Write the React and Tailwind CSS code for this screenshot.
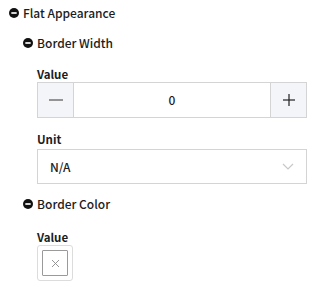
import React from 'react'

const font = { fontFamily: '"Noto Sans CJK KR", "Noto Sans", sans-serif' }

const Collapse = ({ size = 10 }) => (
  <svg width={size} height={size} viewBox="0 0 12 12" className="shrink-0">
    <circle cx="6" cy="6" r="6" fill="#111" />
    <rect x="2.8" y="5" width="6.4" height="2" fill="#fff" />
  </svg>
)

const Label = ({ children }) => (
  <div className="h-[16px] leading-[16px] text-[11.5px] font-bold text-[#1c1c1c]">{children}</div>
)

export default function App() {
  return (
    <div className="w-[316px] h-[287px] bg-white text-[#1c1c1c]" style={font}>
      <div className="h-[26px] flex items-center gap-[4px] pl-[9px] text-[12px] font-medium">
        <Collapse />
        <span>Flat Appearance</span>
      </div>
      <div className="mt-[4px] h-[26px] flex items-center gap-[4px] pl-[23px] text-[12px] font-medium">
        <Collapse />
        <span>Border Width</span>
      </div>

      <div className="pl-[37px] pr-[9px]">
        <div className="mt-[10px]"><Label>Value</Label></div>
        <div className="h-[36px] flex border border-[#d4d4d4]">
          <button className="w-[36px] bg-[#f4f5f9] border-r border-[#d4d4d4] flex items-center justify-center">
            <svg width="14" height="2" viewBox="0 0 14 2"><rect width="14" height="1.2" y="0.4" fill="#555" /></svg>
          </button>
          <div className="flex-1 flex items-center justify-center text-[12px] font-medium">0</div>
          <button className="w-[36px] bg-[#f4f5f9] border-l border-[#d4d4d4] flex items-center justify-center">
            <svg width="12" height="12" viewBox="0 0 12 12">
              <rect x="0" y="5.4" width="12" height="1.2" fill="#222" />
              <rect x="5.4" y="0" width="1.2" height="12" fill="#222" />
            </svg>
          </button>
        </div>

        <div className="mt-[13px]"><Label>Unit</Label></div>
        <div className="mt-[2px] h-[35px] flex items-center justify-between border border-[#d4d4d4] pl-[12px] pr-[12px] text-[12px] font-medium">
          <span>N/A</span>
          <svg width="12" height="7" viewBox="0 0 12 7" fill="none">
            <path d="M1 1l5 5 5-5" stroke="#c8c8c8" strokeWidth="1.2" />
          </svg>
        </div>
      </div>

      <div className="mt-[7px] h-[26px] flex items-center gap-[4px] pl-[23px] text-[12px] font-medium">
        <Collapse />
        <span>Border Color</span>
      </div>

      <div className="pl-[37px]">
        <div className="mt-[12px]"><Label>Value</Label></div>
        <div className="w-[36px] h-[36px] border border-[#dcdcdc] rounded-[3px] flex items-center justify-center">
          <div className="w-[26px] h-[26px] border border-[#9a9a9a] rounded-[1px] flex items-center justify-center">
            <svg width="9" height="9" viewBox="0 0 9 9">
              <path d="M1 1l7 7M8 1l-7 7" stroke="#8a8a8a" strokeWidth="0.9" />
            </svg>
          </div>
        </div>
      </div>
    </div>
  )
}
